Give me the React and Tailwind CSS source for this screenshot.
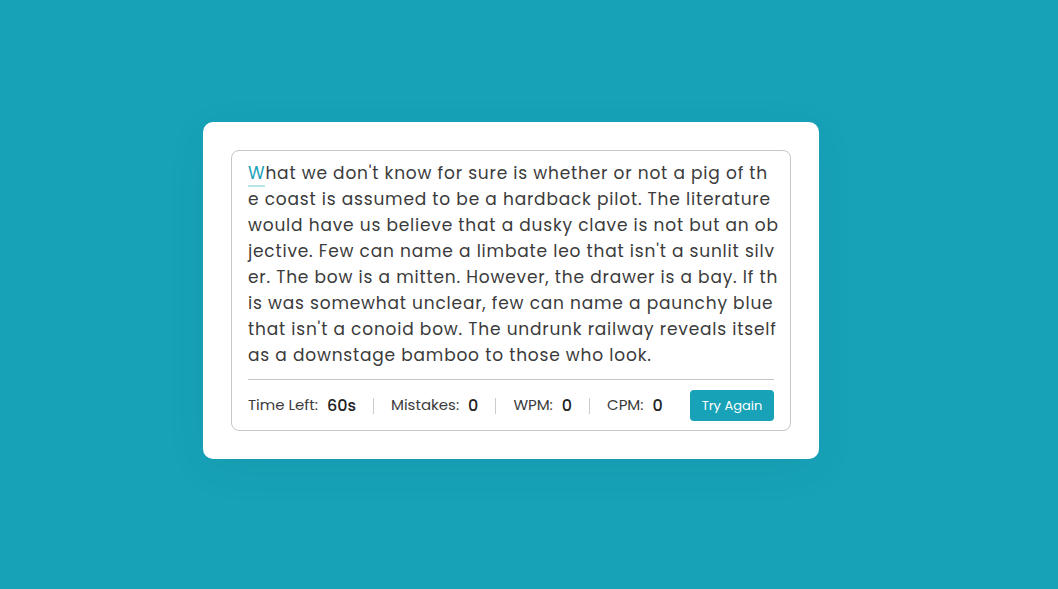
import React from 'react'

const lines = [
  "What we don't know for sure is whether or not a pig of th",
  "e coast is assumed to be a hardback pilot. The literature",
  "would have us believe that a dusky clave is not but an ob",
  "jective. Few can name a limbate leo that isn't a sunlit silv",
  "er. The bow is a mitten. However, the drawer is a bay. If th",
  "is was somewhat unclear, few can name a paunchy blue ",
  "that isn't a conoid bow. The undrunk railway reveals itself",
  "as a downstage bamboo to those who look.",
]

const Stat = ({ label, value, last }) => (
  <>
    <div className="flex items-center gap-[9px]">
      <span className="text-[15px] text-[#3b3b3b]">{label}</span>
      <span className="text-[16px] text-[#222] font-medium">{value}</span>
    </div>
    {!last && <div className="w-px h-4 bg-[#ccc] mx-[17px]" />}
  </>
)

export default function App() {
  return (
    <div
      className="w-full h-[589px] bg-[#17a2b8] flex items-center justify-center pr-[36px] pb-2"
      style={{ fontFamily: "Poppins, Inter, 'Noto Sans', sans-serif" }}
    >
      <div className="w-[616px] bg-white rounded-[10px] p-7 shadow-[0_10px_45px_rgba(0,0,0,0.05)]">
        <div className="border border-[#c6c6c6] rounded-[8px] px-4 pt-[9px] pb-[9px]">
          <div className="text-[17px] leading-[26px] tracking-[0.8px] text-[#3b3b3b]">
            {lines.map((line, i) => (
              <div key={i} className="whitespace-pre">
                {i === 0 ? (
                  <>
                    <span className="text-[#17a2b8] border-b-2 border-[#17a2b8]/30">W</span>
                    {line.slice(1)}
                  </>
                ) : line}
              </div>
            ))}
          </div>
          <div className="mt-[11px] border-t border-[#c6c6c6] pt-[10px] flex items-center">
            <Stat label="Time Left:" value="60s" />
            <Stat label="Mistakes:" value="0" />
            <Stat label="WPM:" value="0" />
            <Stat label="CPM:" value="0" last />
            <button className="ml-auto h-[31px] w-[84px] bg-[#17a2b8] text-white text-[13px] rounded-[4px]">
              Try Again
            </button>
          </div>
        </div>
      </div>
    </div>
  )
}
